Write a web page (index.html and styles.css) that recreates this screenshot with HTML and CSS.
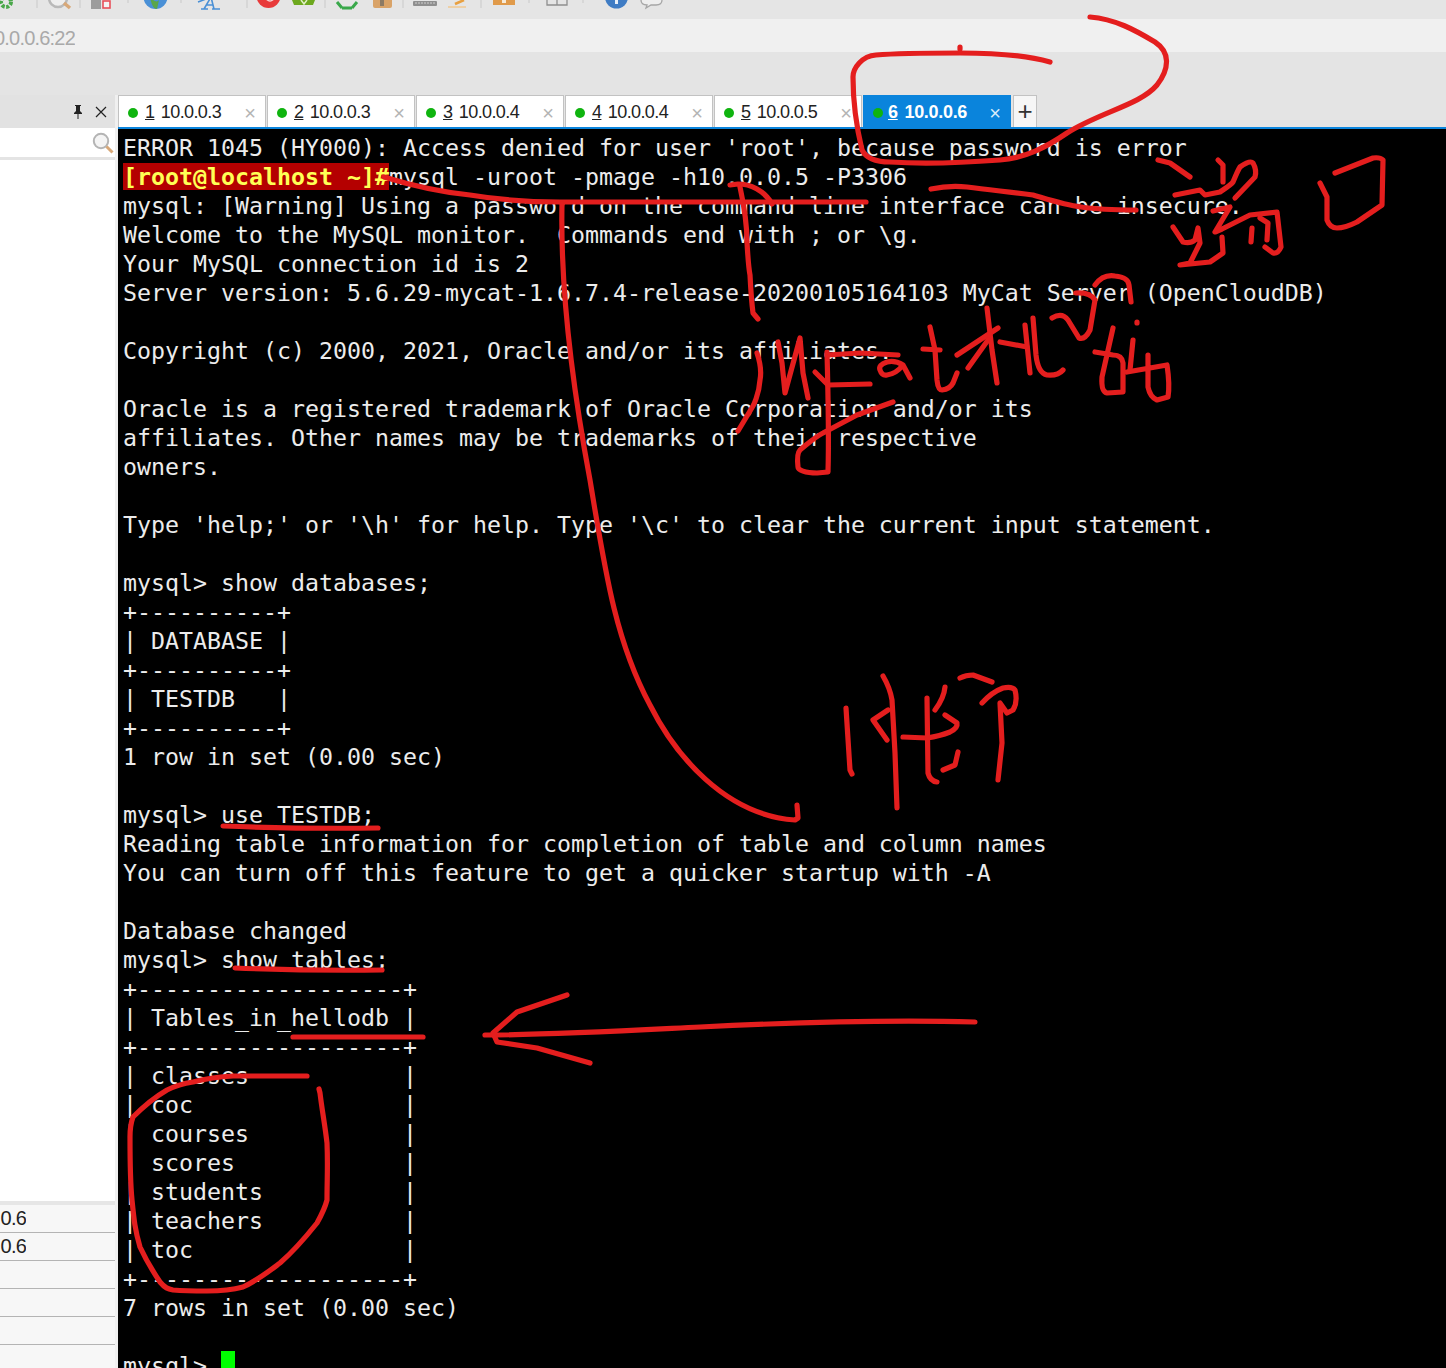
FILE: index.html
```html
<!DOCTYPE html>
<html lang="en">
<head>
<meta charset="utf-8">
<title>Xshell session 10.0.0.6</title>
<link rel="stylesheet" href="styles.css">
</head>
<body>
<div class="app">
  <div class="toolbar">
    <svg class="toolbar-icons" width="700" height="19" viewBox="0 0 700 19" aria-hidden="true">
      <circle cx="6" cy="2" r="5" fill="none" stroke="#4aa84a" stroke-width="4" stroke-dasharray="3 1.5"/>
      <g stroke="#c9c9c9" stroke-width="1"><path d="M37 0v8M80 0v8M128 0v3M181 0v3M247 0v8M325 0v8M403 0v8M481 0v8M529 0v3M583 0v3"/></g>
      <circle cx="58" cy="-2" r="9" fill="#eee" stroke="#b9b9b9" stroke-width="2.5"/>
      <path d="M64 3l6 5" stroke="#d8a878" stroke-width="3.5"/>
      <rect x="91" y="0" width="10" height="9" fill="#9c9c9c"/>
      <rect x="103" y="1" width="7" height="7" fill="#f4f4f4" stroke="#e8505a" stroke-width="1.6"/>
      <circle cx="155.500" cy="-3" r="12" fill="#4a90d6"/>
      <path d="M150 -3q6 7 9 3l-2 9q-5 0-7-12z" fill="#5aa64a"/>
      <path d="M198 2l8-3M204 9l7-12l3 12M207 5h6M201 9h7M212 9h8" fill="none" stroke="#4a90d6" stroke-width="1.6"/>
      <circle cx="268.500" cy="-4" r="12" fill="#e83a3a"/>
      <circle cx="270" cy="-3" r="4" fill="none" stroke="#f8d8d8" stroke-width="1.500"/>
      <path d="M292 0h23l-2 5h-19z" fill="#6da81e"/>
      <path d="M301 0l3 4l3-4" fill="none" stroke="#e2f0c8" stroke-width="1.500"/>
      <path d="M337 2l5 6M357 2l-5 6M342 8h10" fill="none" stroke="#39a84a" stroke-width="3"/>
      <path d="M373 0h19v6q0 2-2 2h-15q-2 0-2-2z" fill="#d9a368"/>
      <rect x="380" y="0" width="4" height="6" fill="#8c7a64"/>
      <rect x="413" y="1" width="24" height="5" rx="1" fill="#8f8f8f"/>
      <path d="M415 3h20" stroke="#cfcfcf" stroke-width="1" stroke-dasharray="2 1"/>
      <path d="M455 4l9-4" stroke="#e8a040" stroke-width="2.500"/>
      <path d="M448 7h18" stroke="#f0c890" stroke-width="1.500"/>
      <path d="M493 0h22v5h-22z" fill="#e09a4a"/>
      <rect x="502" y="0" width="4" height="3" fill="#f6ead8"/>
      <path d="M547 0v5h20v-5M557 0v5" fill="none" stroke="#8f8f8f" stroke-width="1.300"/>
      <circle cx="616.500" cy="-3" r="11.500" fill="#3f7cc4"/>
      <rect x="615" y="0" width="3" height="4" fill="#e8f0fa"/>
      <path d="M641 0q0 5 6 5l-1 3l5-3h5q6 0 6-5" fill="#eeeeee" stroke="#a6a6a6" stroke-width="1.300"/>
    </svg>
  </div>
  <div class="address"><span class="address-text">10.0.0.6:22</span></div>
  <div class="band"></div>
  <div class="workspace">
    <aside class="side">
      <div class="side-head">
        <svg class="pin" width="12" height="15" viewBox="0 0 12 15" aria-hidden="true"><path d="M3 1h6v1H8v5l2 2v1H2V9l2-2V2H3zM5.500 10h1v5h-1z" fill="#222"/></svg>
        <svg class="close" width="12" height="12" viewBox="0 0 12 12" aria-hidden="true"><path d="M1 1l10 10M11 1L1 11" stroke="#222" stroke-width="1.200"/></svg>
      </div>
      <div class="side-search">
        <svg width="22" height="22" viewBox="0 0 22 22" aria-hidden="true"><circle cx="9" cy="9" r="7.200" fill="#f4f4f4" stroke="#b4b4b4" stroke-width="2"/><path d="M14.500 14.500l6 6" stroke="#d8a878" stroke-width="3"/></svg>
      </div>
      <div class="side-blank"></div>
      <div class="side-rows">
        <div class="side-row"><span class="side-cell">10.0.0.6</span></div>
        <div class="side-row"><span class="side-cell">10.0.0.6</span></div>
        <div class="side-row"></div>
        <div class="side-row"></div>
        <div class="side-row"></div>
        <div class="side-row"></div>
      </div>
    </aside>
    <main class="main">
      <div class="tabs">
        <div class="tab"><i class="dot"></i><span class="tab-label"><u>1</u> 10.0.0.3</span><span class="tab-x">×</span></div>
        <div class="tab"><i class="dot"></i><span class="tab-label"><u>2</u> 10.0.0.3</span><span class="tab-x">×</span></div>
        <div class="tab"><i class="dot"></i><span class="tab-label"><u>3</u> 10.0.0.4</span><span class="tab-x">×</span></div>
        <div class="tab"><i class="dot"></i><span class="tab-label"><u>4</u> 10.0.0.4</span><span class="tab-x">×</span></div>
        <div class="tab"><i class="dot"></i><span class="tab-label"><u>5</u> 10.0.0.5</span><span class="tab-x">×</span></div>
        <div class="tab tab-active"><i class="dot"></i><span class="tab-label"><u>6</u> 10.0.0.6</span><span class="tab-x">×</span></div>
        <div class="tab-add">+</div>
      </div>
<pre class="terminal">ERROR 1045 (HY000): Access denied for user 'root', because password is error
<span class="prompt">[root@localhost ~]#</span>mysql -uroot -pmage -h10.0.0.5 -P3306
mysql: [Warning] Using a password on the command line interface can be insecure.
Welcome to the MySQL monitor.  Commands end with ; or \g.
Your MySQL connection id is 2
Server version: 5.6.29-mycat-1.6.7.4-release-20200105164103 MyCat Server (OpenCloudDB)

Copyright (c) 2000, 2021, Oracle and/or its affiliates.

Oracle is a registered trademark of Oracle Corporation and/or its
affiliates. Other names may be trademarks of their respective
owners.

Type 'help;' or '\h' for help. Type '\c' to clear the current input statement.

mysql&gt; show databases;
+----------+
| DATABASE |
+----------+
| TESTDB   |
+----------+
1 row in set (0.00 sec)

mysql&gt; use TESTDB;
Reading table information for completion of table and column names
You can turn off this feature to get a quicker startup with -A

Database changed
mysql&gt; show tables;
+-------------------+
| Tables_in_hellodb |
+-------------------+
| classes           |
| coc               |
| courses           |
| scores            |
| students          |
| teachers          |
| toc               |
+-------------------+
7 rows in set (0.00 sec)

mysql&gt; <span class="cursor"></span></pre>
    </main>
  </div>
  <svg class="ink" width="1446" height="1368" viewBox="0 0 1446 1368" aria-hidden="true">
    <path d="M1090 17C1115 19 1135 30 1155 42C1170 52 1170 68 1157 85C1140 105 1100 112 1067 133C1045 148 1025 158 1000 160C960 163 920 164 890 162C875 162 866 158 862 150C856 125 853 100 853 77C853 68 862 56 876 55C900 53 930 53 960 53C990 53 1025 55 1050 62"/>
    <path d="M960 47v2"/>
    <path d="M384 177C410 185 440 192 470 195C500 200 530 202 560 202L866 202"/>
    <path d="M931 189C945 186 957 186 967 187C990 190 1010 192 1033 195C1050 200 1065 205 1081 207C1100 210 1120 210 1136 210"/>
    <path d="M562 204C560 300 575 400 590 480C605 570 615 640 650 705C675 755 725 815 795 820L798 818L797 805"/>
    <path d="M730 185L738 184C750 184 764 190 772 204"/>
    <path d="M740 187C745 210 747 230 747 242C748 260 749 270 750 275C751 295 752 305 753 313L758 319"/>
    <path d="M757 353C761 365 761 375 760 380C759 395 753 406 753 406L738 431"/>
    <path d="M778 342L782 363L785 393L800 338L803 373L808 398"/>
    <path d="M815 372L828 385"/>
    <path d="M827 352C828 390 829 440 828 472L817 473C805 473 798 470 798 467C797 458 798 452 800 450C810 442 815 437 823 433L857 415L893 402"/>
    <path d="M827 355L860 353L898 355"/>
    <path d="M828 385L870 384"/>
    <path d="M910 378L903 365Q895 360 887 362Q878 365 880 370Q882 376 887 375Q896 374 903 365"/>
    <path d="M930 327L935 350L937 380Q938 390 942 390Q950 389 953 383L957 373"/>
    <path d="M923 349L940 350"/>
    <path d="M957 355L998 328"/>
    <path d="M987 308L992 350L997 383"/>
    <path d="M968 368L988 340"/>
    <path d="M1000 342L1027 347"/>
    <path d="M1025 325L1030 373"/>
    <path d="M1033 318L1036 355Q1038 373 1047 375Q1058 376 1063 370"/>
    <path d="M1052 318Q1062 312 1068 320L1079 338Q1085 340 1090 330L1095 300Q1090 292 1076 293"/>
    <path d="M1095 285Q1103 274 1115 276Q1128 277 1129 285L1131 302"/>
    <path d="M1113 328L1102 377Q1101 392 1107 393L1123 392L1123 363Q1122 355 1113 355L1095 352"/>
    <path d="M1137 322v1"/>
    <path d="M1133 340L1130 370"/>
    <path d="M1127 372L1167 365Q1170 385 1168 397L1157 400Q1150 397 1148 387L1148 355"/>
    <path d="M1158 160L1170 163L1190 177"/>
    <path d="M1175 195L1200 190L1205 195L1220 192Q1232 184 1233 182Q1238 170 1240 167Q1250 160 1253 163Q1257 170 1255 177L1235 198"/>
    <path d="M1218 160L1223 165L1223 182"/>
    <path d="M1173 227L1183 242Q1190 244 1195 240L1198 228L1200 243L1190 263L1180 265L1210 262L1223 253L1222 237"/>
    <path d="M1213 211L1230 207L1215 232L1222 229L1250 215L1277 212L1281 247Q1278 254 1273 253L1265 247"/>
    <path d="M1260 218L1268 223L1267 240"/>
    <path d="M1252 228L1251 242"/>
    <path d="M1320 183L1327 197L1327 220Q1330 228 1337 228Q1345 228 1357 222L1382 205L1383 160Q1380 157 1373 158L1335 173"/>
    <path d="M846 708L850 770L852 774"/>
    <path d="M883 676Q890 688 892 700L895 753L897 808"/>
    <path d="M888 710L873 720L887 740"/>
    <path d="M903 737L927 738Q940 736 950 732Q958 728 957 723L945 715"/>
    <path d="M927 698L928 773Q930 781 937 782"/>
    <path d="M945 687Q944 698 935 710"/>
    <path d="M958 752L955 765L943 770"/>
    <path d="M960 678Q966 675 973 675L992 682"/>
    <path d="M982 703Q992 692 1003 688Q1012 686 1015 690Q1018 702 1013 710L1007 713L1000 703L1002 743L998 780"/>
    <path d="M223 826Q300 829 378 828"/>
    <path d="M235 968Q310 971 382 970"/>
    <path d="M293 1037L423 1037"/>
    <path d="M975 1022C900 1020 800 1022 700 1027C620 1031 550 1035 485 1035"/>
    <path d="M567 995L517 1012L493 1033L497 1042L537 1048L590 1063"/>
    <path d="M307 1076L233 1076C215 1077 205 1079 193 1082C180 1084 175 1086 167 1090C155 1097 145 1105 133 1117C130 1125 130 1130 130 1137C130 1160 130 1180 132 1200C134 1220 135 1230 140 1247C146 1260 152 1270 160 1282C165 1288 168 1289 173 1290C185 1291 195 1291 207 1291C222 1291 232 1290 243 1287C258 1280 268 1272 280 1263C295 1250 305 1238 317 1223C322 1214 325 1208 327 1200C327 1180 328 1165 327 1143C325 1125 322 1110 320 1093L319 1089"/>
  </svg>
</div>
</body>
</html>
```
FILE: styles.css
```css
* { box-sizing: border-box; }
html, body { margin: 0; padding: 0; overflow: hidden; }
body { background: #e4e4e4; font-family: "Liberation Sans", Arial, sans-serif; }

.app {
  position: relative;
  width: 1446px;
  height: 1368px;
  display: flex;
  flex-direction: column;
  overflow: hidden;
}

.toolbar { height: 19px; flex: none; background: #e5e5e5; overflow: hidden; }
.toolbar-icons { display: block; filter: blur(0.5px); }

.address {
  height: 33px;
  flex: none;
  background: #f0f0f0;
  display: flex;
  align-items: center;
  padding-top: 5px;
}
.address-text {
  width: 75px;
  display: flex;
  justify-content: flex-end;
  overflow: hidden;
  white-space: nowrap;
  font-size: 20px;
  letter-spacing: -0.8px;
  color: #a9a9a9;
}

.band { height: 43px; flex: none; background: #e4e4e4; }

.workspace { flex: 1; display: flex; min-height: 0; }

.side {
  width: 118px;
  flex: none;
  display: flex;
  flex-direction: column;
  background: #fff;
  border-right: 3px solid #f0f0f0;
}
.side-head {
  height: 33px;
  flex: none;
  background: #e2e2e2;
  display: flex;
  align-items: center;
  justify-content: flex-end;
  gap: 11px;
  padding: 0 8px 0 0;
}
.side-search {
  height: 32px;
  flex: none;
  display: flex;
  align-items: center;
  justify-content: flex-end;
  padding-right: 1px;
  border-bottom: 3px solid #e4e4e4;
}
.side-blank { flex: 1; background: #fff; }
.side-rows {
  height: 167px;
  flex: none;
  overflow: hidden;
  border-top: 4px solid #e6e6e6;
  background: #f7f7f7;
}
.side-row { height: 28px; border-bottom: 1px solid #b4b4b4; display: flex; align-items: center; }
.side-cell {
  width: 26px;
  display: flex;
  justify-content: flex-end;
  overflow: hidden;
  white-space: nowrap;
  font-size: 20px;
  letter-spacing: -0.8px;
  color: #222;
}

.main { flex: 1; min-width: 0; display: flex; flex-direction: column; }

.tabs {
  height: 34px;
  flex: none;
  display: flex;
  gap: 1px;
  border-bottom: 2px solid #0a84dc;
  background: #e4e4e4;
}
.tab {
  width: 148px;
  height: 32px;
  display: flex;
  align-items: center;
  padding: 2px 9px 0;
  background: #fff;
  border: 1px solid #c2c2c2;
  border-bottom: 0;
  color: #222;
}
.tab-active { background: #0a84dc; border-color: #0a84dc; color: #fff; font-weight: 700; }
.tab-active .tab-label { letter-spacing: -0.3px; margin-left: -2px; }
.dot {
  width: 10px;
  height: 10px;
  flex: none;
  border-radius: 50%;
  background: #0fb40f;
  margin-right: 7px;
}
.tab-label { flex: 1; font-size: 18px; letter-spacing: -0.6px; white-space: nowrap; }
.tab-label u { margin-right: 2px; }
.tab-x { flex: none; font-size: 20px; line-height: 1; color: #b4b4b4; font-weight: 400; }
.tab-active .tab-x { color: #d8ecfa; }
.tab-add {
  width: 24px;
  height: 32px;
  margin-left: 1px;
  display: flex;
  align-items: center;
  justify-content: center;
  background: #f6f6f6;
  border: 1px solid #c2c2c2;
  border-bottom: 0;
  font-size: 26px;
  color: #333;
}

.terminal {
  flex: 1;
  margin: 0;
  padding: 4px 0 0 5px;
  background: #000;
  color: #ececec;
  font-family: "DejaVu Sans Mono", monospace;
  font-size: 23.25px;
  line-height: 29px;
  overflow: hidden;
}
.prompt { background: #b40000; color: #ffff55; font-weight: 700; }
.cursor {
  display: inline-block;
  width: 14px;
  height: 29px;
  background: #00ff00;
  vertical-align: top;
}

.ink {
  position: absolute;
  top: 0;
  left: 0;
  pointer-events: none;
  fill: none;
  stroke: #e41e1e;
  stroke-width: 5.2px;
  stroke-linecap: round;
  stroke-linejoin: round;
}
```
